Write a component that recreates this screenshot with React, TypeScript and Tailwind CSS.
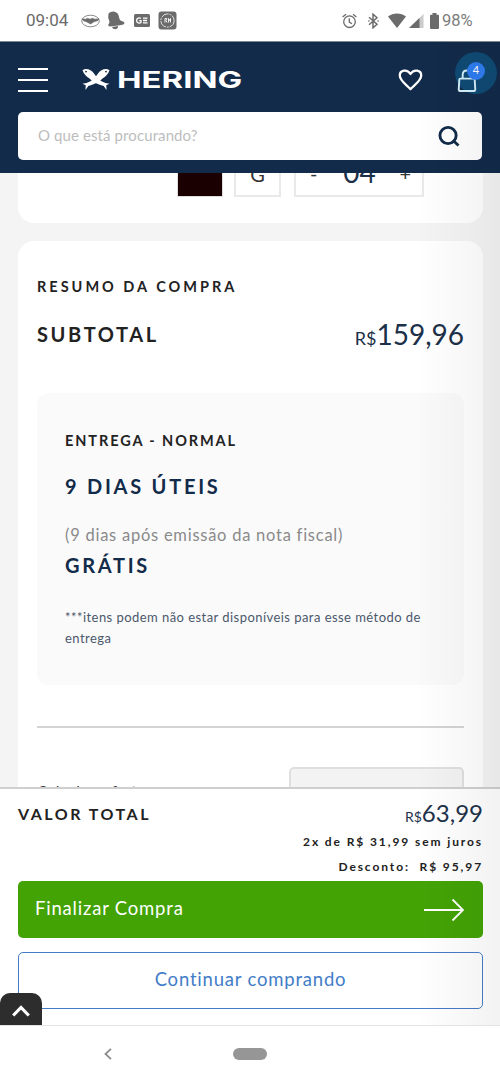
import type { ReactNode } from 'react'

function StatusBar() {
  return (
    <div className="h-[42px] shrink-0 bg-white flex items-center text-[#6b6b6b] border-b border-[#7d8790]">
      <span className="ml-[26px] w-[44px] whitespace-nowrap font-[Roboto,sans-serif] text-[17px] leading-none">09:04</span>
      <svg className="ml-[11px]" width="19" height="14" viewBox="0 0 19 14" fill="none" stroke="currentColor">
        <ellipse cx="9.5" cy="7" rx="8.8" ry="5.8" strokeWidth=".8" />
        <path d="M1 4.800l3.500.4 2-1 2.500 1 2.500-1 2.500 1 4-.4-1.500 2-3.500 1-3.500 2.200L6 8 2.500 6.800z" fill="currentColor" strokeWidth=".6" />
      </svg>
      <svg className="ml-[7px]" width="18" height="19" viewBox="0 0 18 19" fill="currentColor">
        <path d="M1.500 2.500C4-.4 9-.2 11 3c1.200 2 1 5 2.500 6.500l3.500 1.500c1 1.500-.2 2.700-1.700 2.800l-2.500.5L3 15.500C1 15.200.8 13.500 2 12.500 3.200 11 1.500 8.500 1.200 6.500z" />
        <path d="M5 16l6-1c.3 2-1 3.200-2.700 3.200C6.800 18.200 5.500 17.500 5 16z" />
      </svg>
      <svg className="ml-[9px]" width="16" height="13" viewBox="0 0 16 13" fill="none">
        <rect width="16" height="13" rx="1.500" fill="currentColor" />
        <path d="M7 4.600C5.500 3.300 2.600 4 2.600 6.500S5.600 9.800 7 8.500V6.700H5.300M9 4.200h4.500M9 6.500h4M9 8.900h4.500" stroke="white" strokeWidth="1.300" />
      </svg>
      <svg className="ml-[8px]" width="19" height="19" viewBox="0 0 19 19" fill="none">
        <rect x=".5" y=".5" width="18" height="18" rx="3" fill="currentColor" />
        <circle cx="9.500" cy="9.500" r="6.600" stroke="white" strokeWidth=".8" strokeDasharray="8 1 2 1" />
        <path d="M7 11.500v-4h1.800L8 9.500l1 2M10.500 11.500v-4l1 2 1-2v4" stroke="white" strokeWidth=".9" />
      </svg>

      <svg className="ml-auto" width="15" height="16" viewBox="0 0 15 16" fill="none" stroke="currentColor">
        <circle cx="7.500" cy="8.700" r="5.800" strokeWidth="1.300" />
        <path d="M7.300 5.200v3.900l2.700 1.600M.6 4L4 1.200M11 1.200L14.400 4" strokeWidth="1.300" />
      </svg>
      <svg className="ml-[11px]" width="11" height="16" viewBox="0 0 11 16" fill="none" stroke="currentColor" strokeWidth="1.500">
        <path d="M1 4.300l8 7-4 3.500V1.200l4 3.500-8 7" />
        <path d="M.3 8h1.200M9.500 8h1.200" />
      </svg>
      <svg className="ml-[9px]" width="18" height="15" viewBox="0 0 18 15" fill="currentColor">
        <path d="M0 3.500C5-.6 13-.6 18 3.500L9 15z" />
      </svg>
      <svg className="ml-[3px]" width="15" height="14" viewBox="0 0 15 14" fill="currentColor">
        <path d="M14.500 0v14H0z" opacity=".35" />
        <path d="M10.500 3.900V14H0z" />
      </svg>
      <svg className="ml-[6px]" width="9" height="16" viewBox="0 0 9 16" fill="currentColor">
        <path d="M2.500 0h4v1.700H8q1 0 1 1V15q0 1-1 1H1q-1 0-1-1V2.700q0-1 1-1h1.500z" />
      </svg>
      <span className="ml-[3px] mr-[26px] w-[32px] whitespace-nowrap pt-[2px] font-[Roboto,sans-serif] text-[16.5px] leading-none text-[#7c7c7c]">98%</span>
    </div>
  )
}

function Logo() {
  return (
    <div className="ml-[34px] flex items-center text-white">
      <svg width="28" height="23" viewBox="0 0 28 23" fill="currentColor">
        <path d="M.5 2.200C4-.2 9 1.200 12 5.500c3 4.500 6.500 8 11.500 9.500l4 .8-3.200 1.400.2 4.800-2.800-4C15 16 11 14 7.500 10.500 4.500 8.500 1.500 6 .5 2.200z" />
        <path d="M27.500 2.200C24-.2 19 1.200 16 5.500 13 10 9.500 13.500 4.500 15l-4 .8 3.200 1.400L3.500 22l2.800-4c6.700-2 10.700-4 14.200-7.500 3-2 6-4.500 7-8.300z" />
        <circle cx="4" cy="3.600" r=".9" fill="#122b4a" />
        <circle cx="24" cy="3.600" r=".9" fill="#122b4a" />
      </svg>
      <span className="ml-[7px] w-[130px] origin-left scale-x-[1.430] pt-px font-[Inter,sans-serif] text-[23px] leading-none font-bold">HERING</span>
    </div>
  )
}

function Header() {
  return (
    <header className="h-[131px] shrink-0 bg-[#122b4a] px-[18px]">
      <div className="flex h-[70px] items-center pt-[5px]">
        <div className="flex w-[30px] flex-col gap-[9px]">
          <div className="h-[2px] bg-white" />
          <div className="h-[2px] bg-white" />
          <div className="h-[2px] bg-white" />
        </div>
        <Logo />
        <svg className="ml-auto" width="25" height="22" viewBox="0 0 26 23" fill="none" stroke="white" strokeWidth="2.400" strokeLinejoin="round">
          <path d="M13 21C8 16 1.800 12 1.800 6.800 1.800 1 9.500-.2 13 5.200 16.500-.2 24.200 1 24.200 6.800 24.200 12 18 16 13 21z" />
        </svg>
        <div className="relative -mr-[15px] ml-[32px] h-[42px] w-[42px] -translate-y-[7px]">
          <div className="h-[42px] w-[42px] rounded-full bg-[#0f4a74]" />
          <svg className="absolute top-[17px] left-[2px]" width="20" height="24" viewBox="0 0 20 25" fill="none" stroke="#d3eefa" strokeWidth="2">
            <path d="M3 10h14q1 0 1 1l.6 10q0 2-2 2H3.400q-2 0-2-2L2 11q0-1 1-1zM5.500 10V6q0-4.500 4.500-4.500T14.500 6v4" />
          </svg>
          <span className="absolute top-[10px] left-[12px] flex h-[18px] w-[18px] items-center justify-center rounded-full bg-[#2f7cf0] font-[Lato,sans-serif] text-[11px] text-white">4</span>
        </div>
      </div>
      <div className="flex h-[48px] items-center rounded-[5px] bg-white pr-[22px] pl-[20px]">
        <span className="flex-1 pb-[2px] font-[Lato,sans-serif] text-[15px] tracking-[0.1px] text-[#bdbdbd]">O que está procurando?</span>
        <svg width="22" height="21" viewBox="0 0 23 22" fill="none" stroke="#122b4a" strokeWidth="3">
          <circle cx="10.500" cy="10" r="8.500" />
          <path d="M15.500 15l6 5.500" />
        </svg>
      </div>
    </header>
  )
}

function Price({ children, large = false }: { children: ReactNode; large?: boolean }) {
  return (
    <span className="flex items-baseline leading-none text-[#1c3149]">
      <span className={large ? 'text-[18px]' : 'text-[14px]'}>R$</span>
      <span className={large ? 'text-[28px]' : 'text-[24px]'}>{children}</span>
    </span>
  )
}

function ItemCard() {
  return (
    <section className="h-[50px] shrink-0 rounded-b-[16px] bg-white">
      <div className="-mt-[22px] flex h-[46px] text-[#333] pl-[159px]">
        <div className="h-[46px] w-[46px] border border-[#ddd] bg-[#1a0001]" />
        <div className="ml-[11px] flex w-[47px] items-center justify-center border-2 border-[#e9e9e9] text-[20px]">G</div>
        <div className="ml-[13px] flex w-[130px] items-center justify-between border-2 border-[#e9e9e9] pr-[11px] pl-[14px] text-[20px]">
          <span className="pb-[2px]">-</span>
          <span className="pb-[5px] pl-[2px] text-[28px] text-[#1c3149]">04</span>
          <span className="pb-[2px]">+</span>
        </div>
      </div>
    </section>
  )
}

function Delivery() {
  return (
    <div className="mt-[43px] h-[292px] rounded-[12px] bg-[#fafafa] px-[28px] pt-[38px] text-[#122b4a]">
      <h3 className="h-[20px] text-[14.5px] leading-[20px] font-bold tracking-[1.900px] text-[#222]">ENTREGA - NORMAL</h3>
      <p className="mt-[21px] text-[20px] leading-[28px] font-bold tracking-[2.750px]">9 DIAS ÚTEIS</p>
      <p className="mt-[23px] text-[16.5px] leading-[24px] tracking-[0.750px] whitespace-nowrap text-[#8a8a8a]">(9 dias após emissão da nota fiscal)</p>
      <p className="mt-[4px] text-[20px] leading-[28px] font-bold tracking-[2.700px]">GRÁTIS</p>
      <p className="mt-[28px] text-[13px] leading-[21px] tracking-[0.450px] whitespace-nowrap text-[#4b586b]">
        ***itens podem não estar disponíveis para esse método de
        <br />
        entrega
      </p>
    </div>
  )
}

function Summary() {
  return (
    <section className="mt-[18px] h-[620px] shrink-0 rounded-t-[16px] bg-white px-[19px] pt-[36px]">
      <h2 className="h-[20px] text-[14.5px] leading-[20px] font-bold tracking-[3px] text-[#222]">RESUMO DA COMPRA</h2>
      <div className="mt-[21px] flex h-[32px] items-center justify-between">
        <span className="text-[20px] font-bold tracking-[2.600px] text-[#222]">SUBTOTAL</span>
        <Price large>159,96</Price>
      </div>
      <Delivery />
      <div className="mt-[41px] h-[2px] bg-[#d4d4d4]" />
      <div className="mt-[39px] flex justify-between">
        <span className="pt-[15px] text-[15.5px] leading-[18px] tracking-[0.3px] text-[#333]">Calcular o frete</span>
        <div className="h-[50px] w-[175px] rounded-[5px] border-2 border-[#dfdfdf] bg-[#f3f3f3]" />
      </div>
    </section>
  )
}

function Checkout() {
  return (
    <footer className="h-[238px] shrink-0 border-t-2 border-[#cfcfcf] bg-white px-[18px] pr-[17px] text-[#222]">
      <div className="flex h-[46px] items-center justify-between pt-[2px]">
        <span className="pt-px text-[16px] font-bold tracking-[2.500px]">VALOR TOTAL</span>
        <Price>63,99</Price>
      </div>
      <p className="-mt-[6px] text-right text-[12px] leading-[25px] font-bold tracking-[1.900px]">2x de R$ 31,99 sem juros</p>
      <p className="text-right text-[12px] leading-[26px] font-bold tracking-[1.900px] whitespace-pre">Desconto:  R$ 95,97</p>
      <button className="mt-px flex h-[57px] w-full items-center justify-between rounded-[5px] bg-[#43a305] pr-[18px] pl-[17px] text-[18.5px] tracking-[0.8px] text-white">
        <span className="pb-px">Finalizar Compra</span>
        <svg width="41" height="24" viewBox="0 0 41 24" fill="none" stroke="white" strokeWidth="1.800">
          <path d="M0 12h39M28.500 1.500L39 12 28.500 22.500" />
        </svg>
      </button>
      <button className="mt-[14px] flex h-[57px] w-full items-center justify-center rounded-[5px] border-[1.500px] border-[#467cc6] pb-[2px] text-[18.5px] tracking-[0.8px] text-[#427dc8]">
        Continuar comprando
      </button>
    </footer>
  )
}

function NavBar() {
  return (
    <nav className="flex h-[57px] shrink-0 items-center border-t border-[#e4e4e4] bg-white">
      <svg className="ml-[104px]" width="8" height="12" viewBox="0 0 8 12" fill="none" stroke="#8c8c8c" strokeWidth="1.800">
        <path d="M7 .8L1.500 6 7 11.200" />
      </svg>
      <div className="ml-[121px] h-[12px] w-[34px] rounded-full bg-[#969696]" />
    </nav>
  )
}

export default function App() {
  return (
    <div className="relative flex h-[1082px] w-[500px] flex-col overflow-hidden bg-white font-[Lato,sans-serif]">
      <StatusBar />
      <Header />
      <main className="flex min-h-0 flex-1 flex-col overflow-hidden bg-[#f4f4f4] pr-[17px] pl-[18px]">
        <ItemCard />
        <Summary />
      </main>
      <Checkout />
      <NavBar />
      <div className="pointer-events-none absolute top-[42px] right-0 h-[983px] w-[85px] bg-linear-to-r from-transparent to-black/5" />
      <button className="absolute top-[993px] left-0 flex h-[32px] w-[42px] items-center justify-center rounded-t-[10px] bg-[#2d2d2d] pt-[3px]">
        <svg width="18" height="12" viewBox="0 0 18 12" fill="none" stroke="white" strokeWidth="3.200">
          <path d="M1.200 10.500L9 2.500l7.800 8" />
        </svg>
      </button>
    </div>
  )
}
